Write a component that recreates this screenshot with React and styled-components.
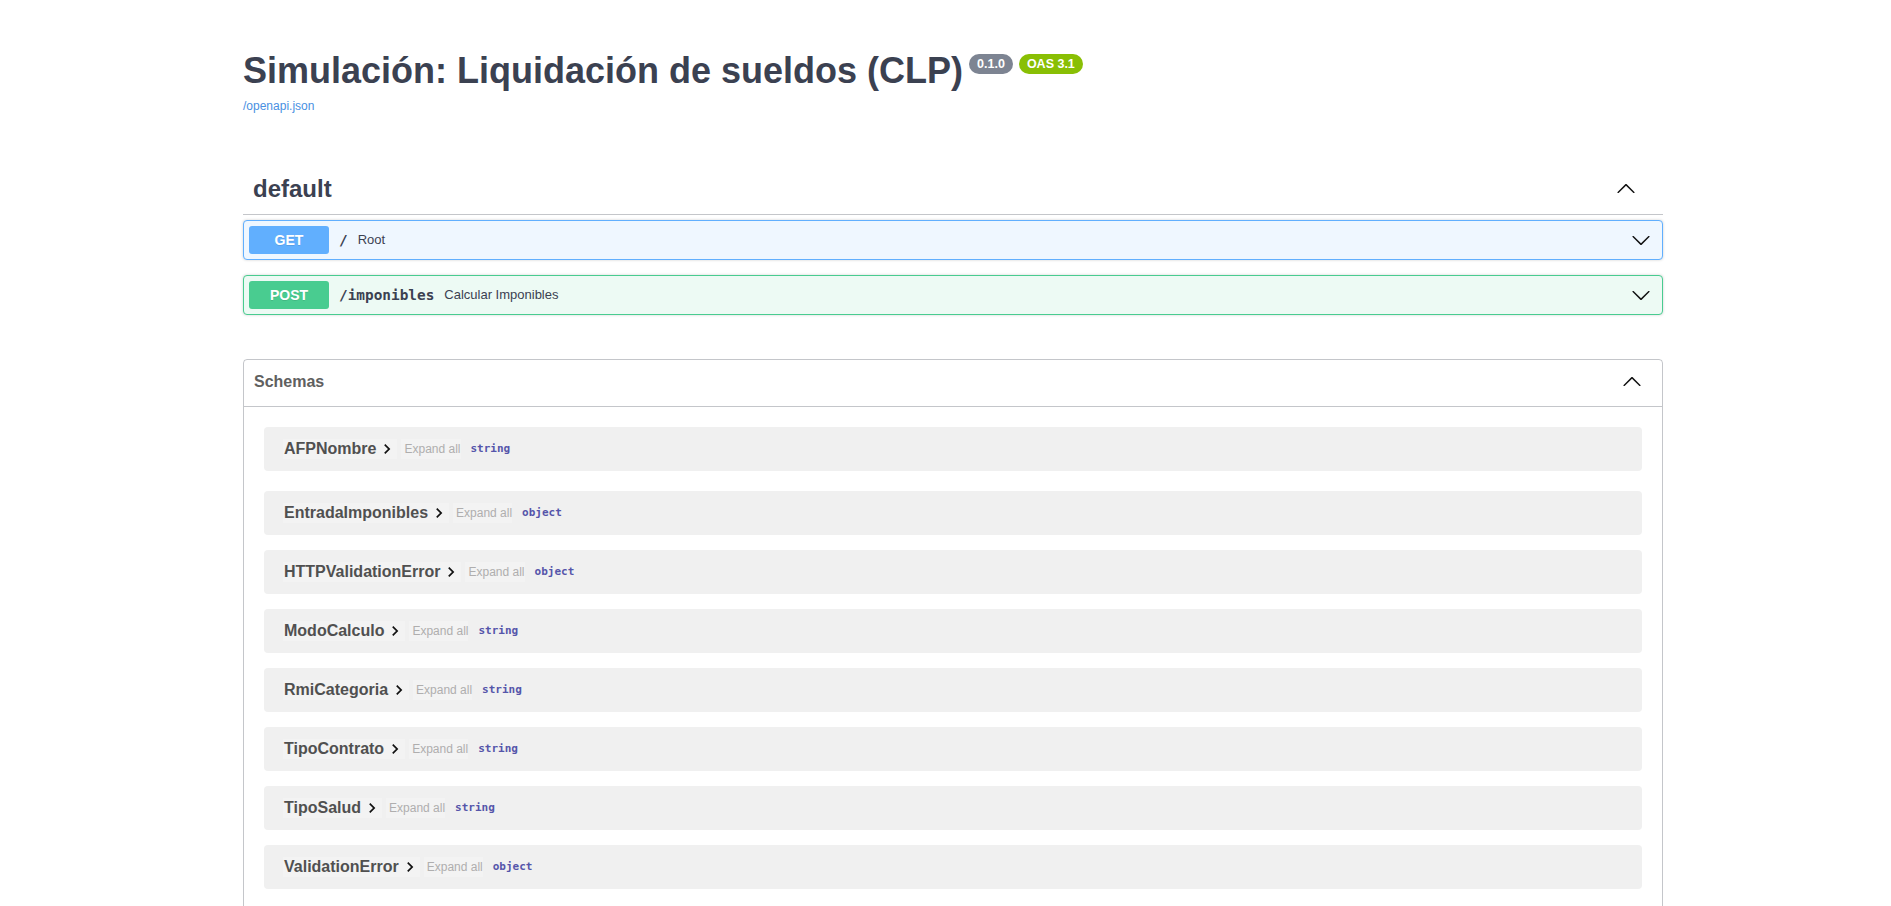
import React from 'react';
import styled, { createGlobalStyle } from 'styled-components';

const GlobalStyle = createGlobalStyle`
  html { scrollbar-width: none; }
  html::-webkit-scrollbar { display: none; }
  * { box-sizing: border-box; }
  body {
    margin: 0;
    background: #fff;
    font-family: "Liberation Sans", Arial, sans-serif;
    color: #3b4151;
  }
`;

const Wrapper = styled.div`
  display: flex;
  flex-direction: column;
  width: 1420px;
  margin-left: 243px;
`;

const Info = styled.header`
  display: flex;
  flex-direction: column;
  align-items: flex-start;
  padding: 50px 0 51px;
`;

const Title = styled.h2`
  display: flex;
  align-items: flex-start;
  margin: 0;
  font-size: 36px;
  line-height: 41px;
  font-weight: 700;
  color: #3b4151;
`;

const Badges = styled.span`
  display: flex;
  gap: 6px;
  margin: 4px 0 0 6px;
`;

const Badge = styled.span`
  background: ${p => p.$bg};
  color: #fff;
  border-radius: 57px;
  padding: 2px 8px;
  font-size: 12.5px;
  line-height: 16px;
  font-weight: 700;
`;

const SpecLink = styled.a`
  margin-top: 8px;
  font-size: 12px;
  line-height: 14px;
  color: #4990e2;
  text-decoration: none;
`;

const TagSection = styled.section`
  display: flex;
  flex-direction: column;
`;

const TagHeader = styled.div`
  display: flex;
  align-items: center;
  padding: 10px 20px 10px 10px;
  border-bottom: 1px solid rgba(59, 65, 81, 0.3);
  margin-bottom: 5px;
`;

const TagTitle = styled.h3`
  flex: 1;
  margin: 0;
  font-size: 24px;
  line-height: 30px;
  font-weight: 700;
  color: #3b4151;
`;

const ArrowSvg = styled.svg`
  width: 20px;
  height: 20px;
  flex-shrink: 0;
  margin-right: ${p => p.$mr || 0}px;
  transform: ${p => (p.$up ? 'rotate(180deg)' : 'none')};
`;

const Arrow = ({ up, mr }) => (
  <ArrowSvg viewBox="0 0 20 20" $up={up} $mr={mr}>
    <path
      fill="#111"
      d="M17.418 6.109c.272-.268.709-.268.979 0s.271.701 0 .969l-7.908 7.83c-.27.268-.707.268-.979 0l-7.908-7.83c-.27-.268-.27-.701 0-.969.271-.268.709-.268.979 0L10 13.25l7.418-7.141z"
    />
  </ArrowSvg>
);

const Opblock = styled.div`
  display: flex;
  align-items: center;
  padding: 5px;
  margin-bottom: 15px;
  border: 1px solid ${p => p.$color};
  background: ${p => p.$bg};
  border-radius: 4px;
  box-shadow: 0 0 3px rgba(0, 0, 0, 0.19);
`;

const Method = styled.span`
  min-width: 80px;
  padding: 6px 0;
  border-radius: 3px;
  background: ${p => p.$color};
  color: #fff;
  text-align: center;
  font-size: 14px;
  line-height: 16px;
  font-weight: 700;
  text-shadow: 0 1px 0 rgba(0, 0, 0, 0.1);
`;

const PathText = styled.span`
  padding: 0 10px;
  font-family: "DejaVu Sans Mono", "Liberation Mono", monospace;
  font-size: 14.4px;
  line-height: 16px;
  font-weight: 700;
  color: #3b4151;
`;

const Description = styled.span`
  flex: 1;
  font-size: 13px;
  line-height: 16px;
  color: #3b4151;
`;

const Models = styled.section`
  margin-top: 29px;
  border: 1px solid rgba(59, 65, 81, 0.3);
  border-radius: 4px;
`;

const ModelsHeader = styled.h4`
  display: flex;
  align-items: center;
  margin: 0;
  padding: 10px 20px 12px 10px;
  font-size: 16px;
  line-height: 24px;
  font-weight: 700;
  color: #606060;
  border-bottom: 1px solid rgba(59, 65, 81, 0.3);
`;

const ModelsTitle = styled.span`
  flex: 1;
`;

const ModelList = styled.div`
  display: flex;
  flex-direction: column;
  padding: 20px 20px 20px;
`;

const ModelRow = styled.div`
  display: flex;
  align-items: center;
  height: 44px;
  padding: 0 20px 0 19px;
  margin-bottom: 15px;
  background: #f0f0f0;
  border-radius: 4px;
  &:first-child {
    margin-bottom: 20px;
  }
`;

const NameButton = styled.span`
  display: inline-flex;
  align-items: center;
  height: 20px;
  padding-left: 1px;
  background: #f3f3f3;
  font-size: 16px;
  line-height: 20px;
  font-weight: 700;
  color: #505050;
`;

const NameChevronSvg = styled.svg`
  width: 20px;
  height: 20px;
  margin-left: 1px;
`;

const NameChevron = () => (
  <NameChevronSvg viewBox="0 0 24 24">
    <path fill="#111" d="M10 6L8.59 7.41 13.17 12l-4.58 4.59L10 18l6-6z" />
  </NameChevronSvg>
);

const ExpandButton = styled.span`
  margin-left: 4px;
  padding-left: 3px;
  height: 20px;
  line-height: 20px;
  font-size: 12px;
  color: #afaeae;
  background: #f3f3f3;
`;

const TypeLabel = styled.span`
  margin-left: 10px;
  font-family: "DejaVu Sans Mono", "Liberation Mono", monospace;
  font-size: 11px;
  line-height: 20px;
  font-weight: 700;
  color: #55a;
`;

const operations = [
  { method: 'GET', path: '/', desc: 'Root', color: '#61affe', bg: '#eff7ff' },
  { method: 'POST', path: '/imponibles', desc: 'Calcular Imponibles', color: '#49cc90', bg: '#edfaf4' },
];

const schemas = [
  ['AFPNombre', 'string'],
  ['EntradaImponibles', 'object'],
  ['HTTPValidationError', 'object'],
  ['ModoCalculo', 'string'],
  ['RmiCategoria', 'string'],
  ['TipoContrato', 'string'],
  ['TipoSalud', 'string'],
  ['ValidationError', 'object'],
];

export default function App() {
  return (
    <>
      <GlobalStyle />
      <Wrapper>
        <Info>
          <Title>
            Simulación: Liquidación de sueldos (CLP)
            <Badges>
              <Badge $bg="#7d8492">0.1.0</Badge>
              <Badge $bg="#89bf04">OAS 3.1</Badge>
            </Badges>
          </Title>
          <SpecLink href="#">/openapi.json</SpecLink>
        </Info>

        <TagSection>
          <TagHeader>
            <TagTitle>default</TagTitle>
            <Arrow up mr={7} />
          </TagHeader>
          {operations.map(op => (
            <Opblock key={op.method} $color={op.color} $bg={op.bg}>
              <Method $color={op.color}>{op.method}</Method>
              <PathText>{op.path}</PathText>
              <Description>{op.desc}</Description>
              <Arrow mr={6} />
            </Opblock>
          ))}
        </TagSection>

        <Models>
          <ModelsHeader>
            <ModelsTitle>Schemas</ModelsTitle>
            <Arrow up />
          </ModelsHeader>
          <ModelList>
            {schemas.map(([name, type]) => (
              <ModelRow key={name}>
                <NameButton>
                  {name}
                  <NameChevron />
                </NameButton>
                <ExpandButton>Expand all</ExpandButton>
                <TypeLabel>{type}</TypeLabel>
              </ModelRow>
            ))}
          </ModelList>
        </Models>
      </Wrapper>
    </>
  );
}
